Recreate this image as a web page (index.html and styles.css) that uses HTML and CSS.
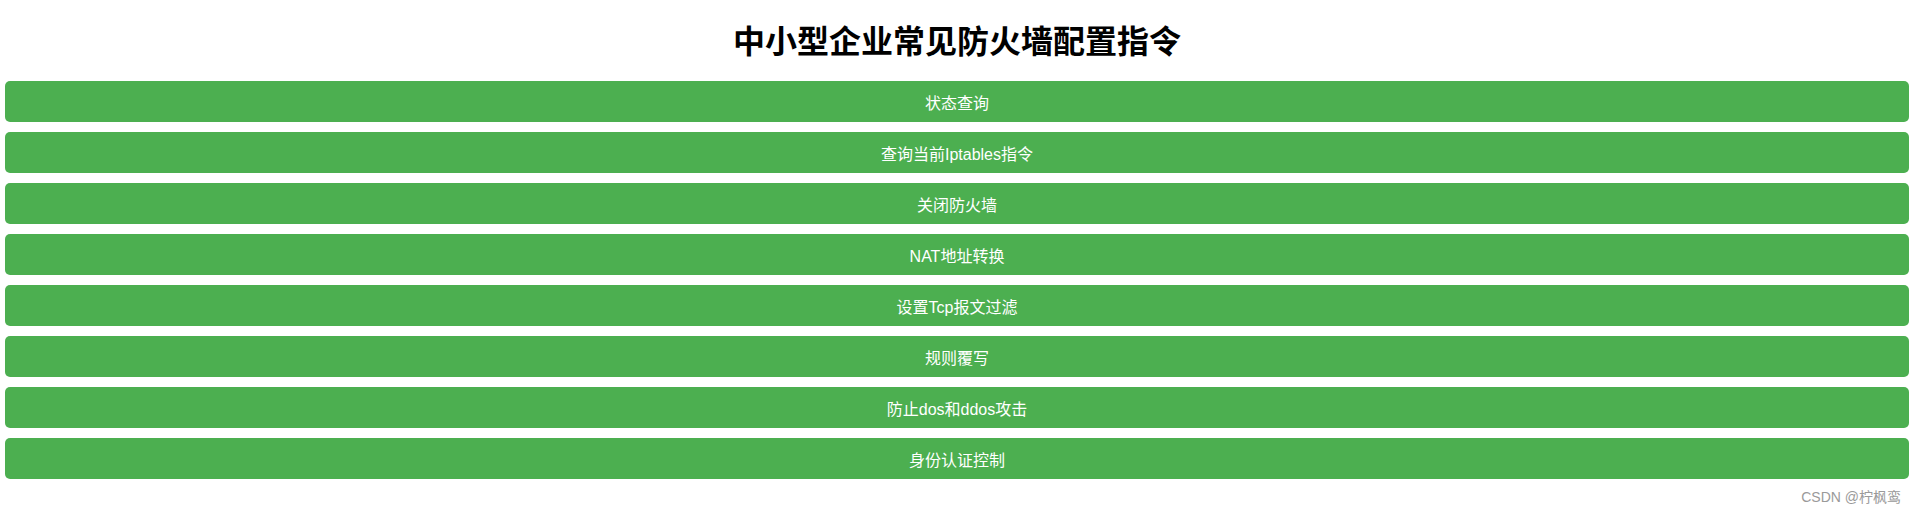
FILE: index.html
```html
<!DOCTYPE html>
<html lang="zh-CN">
<head>
  <meta charset="UTF-8">
  <title>中小型企业常见防火墙配置指令</title>
  <link rel="stylesheet" href="styles.css">
</head>
<body>

<h1 class="title">中小型企业常见防火墙配置指令</h1>

<!-- 指令分类按钮 -->
<div class="menu">
  <button class="menu-btn">状态查询</button>
  <button class="menu-btn">查询当前Iptables指令</button>
  <button class="menu-btn">关闭防火墙</button>
  <button class="menu-btn">NAT地址转换</button>
  <button class="menu-btn">设置Tcp报文过滤</button>
  <button class="menu-btn">规则覆写</button>
  <button class="menu-btn">防止dos和ddos攻击</button>
  <button class="menu-btn">身份认证控制</button>
</div>

<div class="mark">CSDN @柠枫鸾</div>

</body>
</html>
```

FILE: styles.css
```css
body {
  font-family: "Liberation Sans", "Noto Sans CJK SC", sans-serif;
  background-color: #fff;
  margin: 0;
  padding: 0 8px 0 5px;
  position: relative;
  min-height: 514px;
  box-sizing: border-box;
}

.title {
  margin: 0;
  padding: 22px 0 19px;
  font-size: 32px;
  line-height: 40px;
  font-weight: bold;
  text-align: center;
  color: #000;
}

.menu {
  display: flex;
  flex-direction: column;
  gap: 10px;
}

.menu-btn {
  height: 41px;
  width: 100%;
  background-color: #4caf50;
  color: white;
  border: none;
  border-radius: 5px;
  font-family: "Liberation Sans", "Noto Sans CJK SC", sans-serif;
  font-size: 16px;
  cursor: pointer;
}

.mark {
  position: absolute;
  right: 16px;
  bottom: 8px;
  font-size: 14px;
  color: #9a9a9a;
}
```
